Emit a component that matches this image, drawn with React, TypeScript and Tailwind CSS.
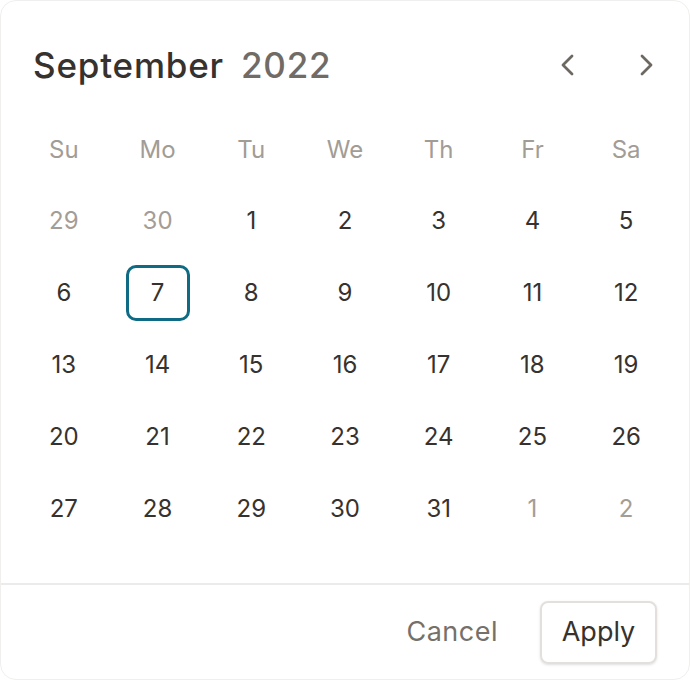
const WEEKDAYS = ["Su", "Mo", "Tu", "We", "Th", "Fr", "Sa"];

type Day = { n: number; muted?: boolean };

const WEEKS: Day[][] = [
  [{ n: 29, muted: true }, { n: 30, muted: true }, { n: 1 }, { n: 2 }, { n: 3 }, { n: 4 }, { n: 5 }],
  [{ n: 6 }, { n: 7 }, { n: 8 }, { n: 9 }, { n: 10 }, { n: 11 }, { n: 12 }],
  [{ n: 13 }, { n: 14 }, { n: 15 }, { n: 16 }, { n: 17 }, { n: 18 }, { n: 19 }],
  [{ n: 20 }, { n: 21 }, { n: 22 }, { n: 23 }, { n: 24 }, { n: 25 }, { n: 26 }],
  [{ n: 27 }, { n: 28 }, { n: 29 }, { n: 30 }, { n: 31 }, { n: 1, muted: true }, { n: 2, muted: true }],
];

function Chevron({ dir }: { dir: "left" | "right" }) {
  return (
    <svg width="16" height="24" viewBox="0 0 16 24" fill="none" stroke="currentColor" strokeWidth="2.8" strokeLinecap="round" strokeLinejoin="round">
      {dir === "left" ? <polyline points="12,3 3,12 12,21" /> : <polyline points="4,3 13,12 4,21" />}
    </svg>
  );
}

export default function App() {
  return (
    <div className="h-[680px] w-[690px] bg-white" style={{ fontFamily: "Inter, 'Noto Sans', sans-serif" }}>
      <div className="flex h-full flex-col rounded-2xl border border-[#f1efed] bg-white">
        <div className="flex h-[130px] items-center justify-between pl-[32px] pr-[35px] pb-[2px]">
          <div className="flex items-baseline gap-[17px] text-[35px] font-medium tracking-[0.8px]">
            <span className="text-[#37322d]">September</span>
            <span className="text-[#716b65]">2022</span>
          </div>
          <div className="flex items-center gap-[62px] text-[#6e6862]">
            <Chevron dir="left" />
            <Chevron dir="right" />
          </div>
        </div>

        <div className="grid grid-cols-7 px-4">
          {WEEKDAYS.map((d) => (
            <div key={d} className="flex h-[38px] items-center justify-center text-[24px] text-[#a29c96]">
              {d}
            </div>
          ))}
        </div>

        <div className="mt-[16px] flex flex-col px-4">
          {WEEKS.map((week, i) => (
            <div key={i} className="grid h-[72px] grid-cols-7">
              {week.map((day, j) => (
                <div key={j} className="flex items-center justify-center">
                  <div
                    className={
                      day.n === 7 && !day.muted
                        ? "flex h-[56px] w-[64px] items-center justify-center rounded-[10px] border-[3px] border-[#0e6b83] text-[24px] text-[#37322d]"
                        : day.muted
                          ? "text-[24px] text-[#a39d97]"
                          : "text-[24px] text-[#37322d]"
                    }
                  >
                    {day.n}
                  </div>
                </div>
              ))}
            </div>
          ))}
        </div>

        <div className="mt-auto border-t-2 border-[#ecebea]">
          <div className="flex h-[94px] items-center justify-end gap-[42px] pr-[32px] pt-[1px]">
            <button type="button" className="text-[27px] tracking-[0.5px] text-[#76706a]">
              Cancel
            </button>
            <button
              type="button"
              className="h-[63px] w-[117px] rounded-[8px] border-2 border-[#e2dfdc] text-[27px] text-[#37322d] shadow-sm"
            >
              Apply
            </button>
          </div>
        </div>
      </div>
    </div>
  );
}
